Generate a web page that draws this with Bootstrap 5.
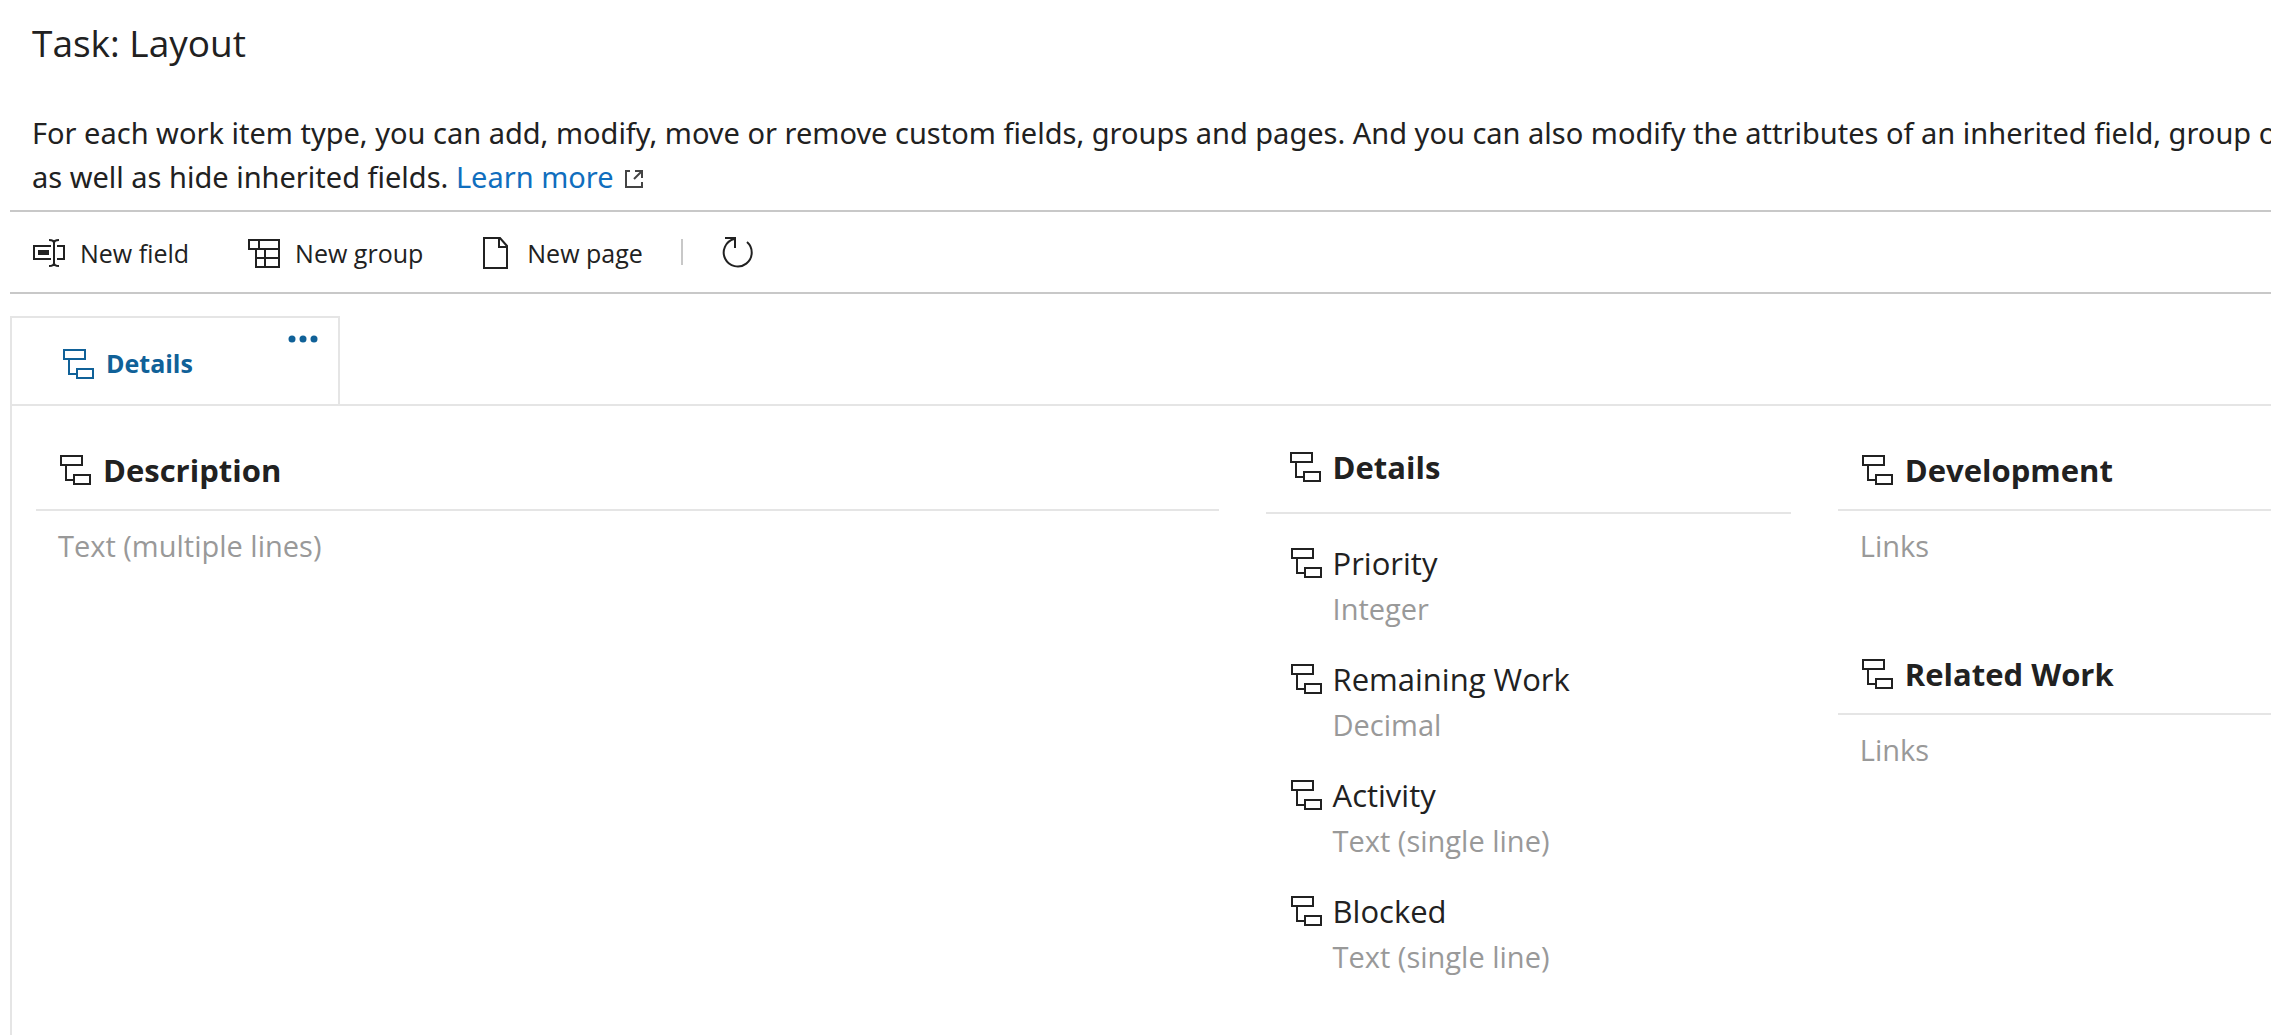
<!DOCTYPE html>
<html lang="en">
<head>
<meta charset="utf-8">
<meta name="viewport" content="width=device-width, initial-scale=1">
<title>Task: Layout</title>
<link href="https://cdn.jsdelivr.net/npm/bootstrap@5.3.0/dist/css/bootstrap.min.css" rel="stylesheet">
<style>
  body { font-family: "Open Sans", "Noto Sans", sans-serif; color: #212121; background: #fff; overflow-x: hidden; }
  svg { display: block; flex: none; fill: none; stroke: currentColor; stroke-width: 2; }
  .page-shell { padding-left: 10px; min-height: 100vh; }
  .page-head { padding: 19px 0 11px 22px; }
  .page-title { font-size: 37px; line-height: 48px; font-weight: 400; margin-bottom: 44px; }
  .intro { font-family: "Noto Sans", "Open Sans", sans-serif; font-size: 29px; line-height: 44px; white-space: nowrap; margin: 0; }
  .intro a { color: #106ebe; text-decoration: none; }
  .intro svg { display: inline-block; margin-left: 3px; color: #444; vertical-align: -1px; }
  .toolbar { border-top: 2px solid #c8c8c8; border-bottom: 2px solid #c8c8c8; height: 84px; padding-left: 22px; gap: 58px; margin-bottom: 22px; }
  .tool { font-size: 25px; line-height: 36px; color: inherit; border: 0; background: none; padding: 2px 0 0; display: flex; align-items: center; gap: 14px; }
  .tool-end { gap: 38px; }
  .tool-sep { width: 2px; height: 26px; background: #c8c8c8; }
  .page-tab { width: 330px; height: 88px; border: 2px solid #e5e5e5; border-bottom: 0; color: #106198; padding: 6px 0 0 50px; text-decoration: none; font-size: 25px; font-weight: 700; gap: 12px; }
  .page-more { position: absolute; right: 18px; top: 15px; padding: 4px; border: 0; background: none; color: #106198; }
  .tab-holder { position: relative; width: 330px; }
  .panel { border-top: 2px solid #e5e5e5; border-left: 2px solid #e5e5e5; padding: 36px 0 0 24px; }
  .panel-grid { display: grid; grid-template-columns: 1182fr 525fr 433fr; column-gap: 47px; }
  .group-head { display: flex; align-items: center; gap: 12px; height: 69px; padding: 0 0 12px 23px; border-bottom: 2px solid #e5e5e5; margin: 0; font-size: 31px; line-height: 44px; font-weight: 700; }
  .group-head.fields-head { height: 72px; padding-bottom: 21px; margin-bottom: 25px; }
  .kind { font-size: 29px; line-height: 40px; color: #999; margin: 0; }
  .group-kind { padding: 15px 0 0 22px; margin-bottom: 80px; }
  .field { padding-left: 24px; height: 116px; }
  .field-name { display: flex; align-items: center; gap: 11px; font-size: 31px; line-height: 48px; }
  .field .kind { padding-left: 43px; line-height: 44px; }
</style>
<script src="https://cdn.jsdelivr.net/npm/bootstrap@5.3.0/dist/js/bootstrap.bundle.min.js"></script>
</head>
<body>
<svg width="0" height="0" class="position-absolute" aria-hidden="true">
  <symbol id="tree" viewBox="0 0 32 32"><path d="M2 2h21v9H2zM7 11v15h8M15 21h16v9H15z"/></symbol>
</svg>
<div class="page-shell d-flex flex-column">
  <header class="page-head">
    <h1 class="page-title">Task: Layout</h1>
    <p class="intro">For each work item type, you can add, modify, move or remove custom fields, groups and pages. And you can also modify the attributes of an inherited field, group or<br>as well as hide inherited fields. <a href="#">Learn more <svg width="20" height="20" viewBox="0 0 20 20" aria-hidden="true"><path d="M6 2H2v16h16v-5M11 2h7v7M18 2L10 10"/></svg></a></p>
  </header>
  <div class="toolbar d-flex align-items-center" role="toolbar" aria-label="Layout actions">
    <button class="tool" type="button"><svg width="34" height="30" viewBox="0 0 34 30" aria-hidden="true"><path d="M19 8H2v13h17M25 8h7v13h-7M17 2c3 0 5 1 5 3v20c0 2-2 3-5 3M27 2c-3 0-5 1-5 3M27 28c-3 0-5-1-5-3"/><path d="M6 12h11v5H6z" fill="currentColor" stroke="none"/></svg>New field</button>
    <button class="tool" type="button"><svg width="34" height="31" viewBox="0 0 34 31" aria-hidden="true"><path d="M2 2h30v27H9V11H2zM12 2v9M9 11h23M9 20h23M18 11v18"/></svg>New group</button>
    <div class="tool-end d-flex align-items-center">
      <button class="tool" type="button"><svg width="32" height="34" viewBox="0 0 32 34" aria-hidden="true"><path d="M3 2h16l7 8v22H3zM18 2v9h8"/></svg>New page</button>
      <span class="tool-sep"></span>
      <button class="tool" type="button" aria-label="Refresh"><svg width="34" height="34" viewBox="0 0 34 34" aria-hidden="true"><path d="M4 2h10v10M13 3A14 14 0 1 0 26 6"/></svg></button>
    </div>
  </div>
  <div class="tab-holder">
    <a class="page-tab d-flex align-items-center" href="#"><svg width="32" height="32"><use href="#tree"/></svg>Details</a>
    <button class="page-more" type="button" aria-label="Page actions"><svg width="30" height="8" viewBox="0 0 30 8"><g fill="currentColor" stroke="none"><circle cx="4" cy="4" r="3.500"/><circle cx="15" cy="4" r="3.500"/><circle cx="26" cy="4" r="3.500"/></g></svg></button>
  </div>
  <main class="panel flex-grow-1">
    <div class="panel-grid">
      <section>
        <h2 class="group-head"><svg width="32" height="32"><use href="#tree"/></svg>Description</h2>
        <p class="kind group-kind">Text (multiple lines)</p>
      </section>
      <section>
        <h2 class="group-head fields-head"><svg width="32" height="32"><use href="#tree"/></svg>Details</h2>
        <div class="field"><div class="field-name"><svg width="32" height="32"><use href="#tree"/></svg>Priority</div><p class="kind">Integer</p></div>
        <div class="field"><div class="field-name"><svg width="32" height="32"><use href="#tree"/></svg>Remaining Work</div><p class="kind">Decimal</p></div>
        <div class="field"><div class="field-name"><svg width="32" height="32"><use href="#tree"/></svg>Activity</div><p class="kind">Text (single line)</p></div>
        <div class="field"><div class="field-name"><svg width="32" height="32"><use href="#tree"/></svg>Blocked</div><p class="kind">Text (single line)</p></div>
      </section>
      <section>
        <h2 class="group-head"><svg width="32" height="32"><use href="#tree"/></svg>Development</h2>
        <p class="kind group-kind">Links</p>
        <h2 class="group-head"><svg width="32" height="32"><use href="#tree"/></svg>Related Work</h2>
        <p class="kind group-kind mb-0">Links</p>
      </section>
    </div>
  </main>
</div>
</body>
</html>
